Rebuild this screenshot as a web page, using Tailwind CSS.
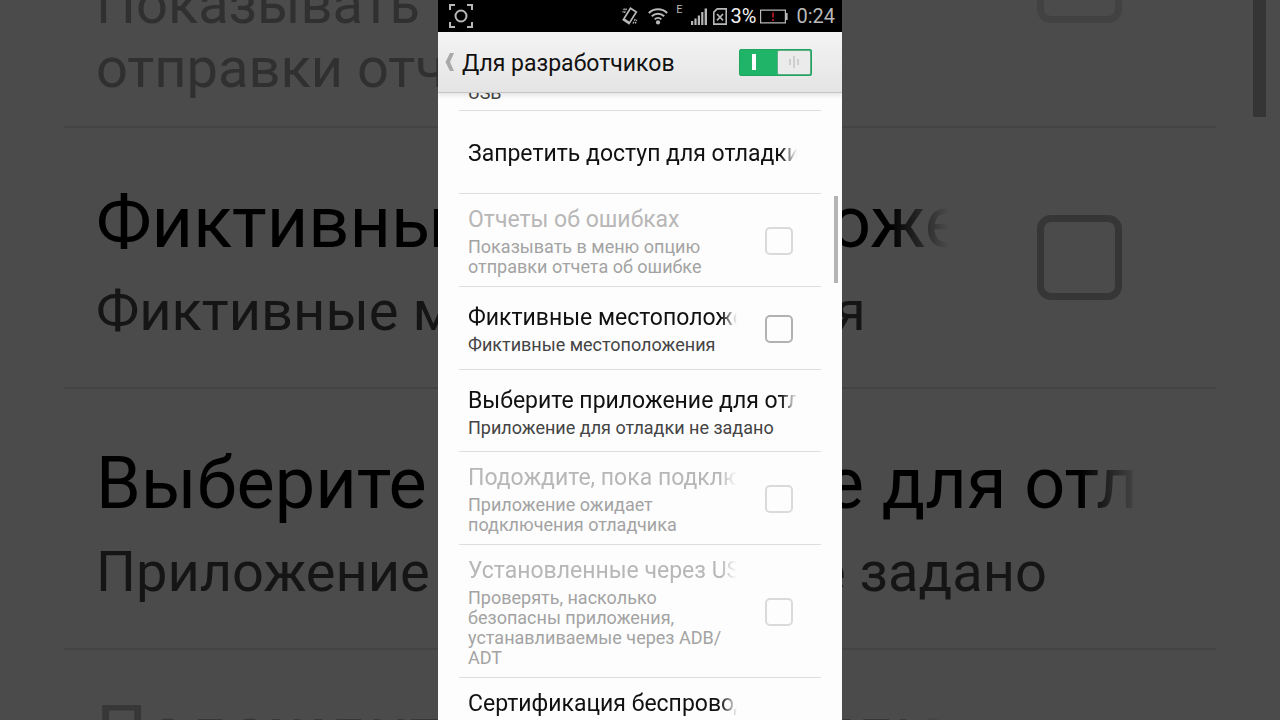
<!DOCTYPE html>
<html lang="ru">
<head>
    <meta charset="UTF-8">
    <meta name="viewport" content="width=device-width, initial-scale=1.0">
    <title>Для разработчиков</title>
    <script src="https://cdn.jsdelivr.net/npm/@tailwindcss/browser@4"></script>
</head>
<body class="relative h-screen overflow-hidden bg-[#4b4b4b] font-[Roboto,sans-serif]">
    <!-- Enlarged, dimmed backdrop -->
    <div class="absolute inset-0 overflow-hidden" aria-hidden="true">
        <ul class="mx-[5%] -mt-[166px]">
            <li class="flex h-[294px] items-center gap-[88px] border-b-2 border-[#434343] pr-[76px] pl-8">
                <div class="min-w-0 flex-1">
                    <p class="h-[111px]"></p>
                    <p class="text-[56px] leading-[64px] text-[#303030]">Показывать в меню опцию отправки отчета об ошибке</p>
                </div>
                <span class="mr-[18px] size-[85px] rounded-[14px] border-[7px] border-[#424242]"></span>
            </li>
            <li class="flex h-[261px] items-center gap-[88px] border-b-2 border-[#434343] pr-[76px] pl-8">
                <div class="min-w-0 flex-1 pt-1">
                    <p class="mb-[10px] overflow-hidden text-[72px] leading-[93px] whitespace-nowrap text-black [mask-image:linear-gradient(to_right,black_calc(100%-60px),transparent)]">Фиктивные местоположения</p>
                    <p class="text-[56px] leading-[64px] text-[#151515]">Фиктивные местоположения</p>
                </div>
                <span class="mr-[18px] size-[85px] rounded-[14px] border-[7px] border-[#363636]"></span>
            </li>
            <li class="flex h-[261px] items-center border-b-2 border-[#434343] pr-[76px] pl-8">
                <div class="min-w-0 flex-1 pt-1">
                    <p class="mb-[10px] overflow-hidden text-[72px] leading-[93px] whitespace-nowrap text-black [mask-image:linear-gradient(to_right,black_calc(100%-60px),transparent)]">Выберите приложение для отладки</p>
                    <p class="text-[56px] leading-[64px] text-[#151515]">Приложение для отладки не задано</p>
                </div>
            </li>
            <li class="flex pt-9 pr-[265px] pl-8">
                <p class="min-w-0 flex-1 overflow-hidden text-[72px] leading-[93px] whitespace-nowrap text-[#373737] [mask-image:linear-gradient(to_right,black_calc(100%-60px),transparent)]">Подождите, пока подключится отладчик</p>
            </li>
        </ul>
        <div class="absolute top-0 right-[14px] h-[117px] w-[13px] bg-[#353535]"></div>
    </div>

    <!-- Phone screen -->
    <div class="relative mx-auto flex h-full w-full max-w-[404px] flex-col overflow-hidden bg-[#fdfdfd]">
        <!-- Status bar -->
        <div class="z-10 flex h-8 shrink-0 items-center bg-black pr-[7px] pl-[11px] text-[#b8b8b8]">
            <svg class="size-6" viewBox="0 0 24 24" fill="none" stroke="currentColor" stroke-width="2">
                <path d="M1 6V1h5M18 1h5v5M23 18v5h-5M6 23H1v-5"/>
                <circle cx="12" cy="12" r="5.5"/>
            </svg>
            <div class="ml-auto flex items-center">
                <svg class="mr-2 h-[18px] w-5" viewBox="0 0 20 18" fill="none" stroke="currentColor">
                    <path stroke-width="1.7" d="M10.500 1.200 16.300 5 9 16.600 3.300 12.800Z"/>
                    <path stroke-width="1.3" stroke-dasharray="2 1" d="M6.500 1.500 4 7M4.500 1.500 2.800 5.500M13 16.500l2.500-5M15.300 16.500l1.500-3.700"/>
                    <path stroke-width="2" d="M3.800 12 9 15.600"/>
                </svg>
                <svg class="h-[18px] w-5" viewBox="0 0 20 18" fill="none" stroke="currentColor" stroke-width="2">
                    <path d="M.8 6a13.2 13.2 0 0 1 18.4 0M3.8 9.3a8.9 8.9 0 0 1 12.4 0M6.7 12.4a4.7 4.7 0 0 1 6.6 0"/>
                    <circle cx="10" cy="15.4" r="2.1" fill="currentColor" stroke="none"/>
                </svg>
                <span class="mr-2 mb-3 ml-2 text-[11px] leading-3">E</span>
                <svg class="h-[18px] w-4" viewBox="0 0 16 18" fill="currentColor">
                    <path d="M0 14h2.200v4H0zM3.400 11.500h2.200V18H3.400zM6.800 8.500H9V18H6.800zM10.200 5h2.200v13h-2.200zM13.600 1.500H16V18h-2.400z"/>
                </svg>
                <svg class="ml-[6px] h-[17px] w-[14px]" viewBox="0 0 14 17" fill="none" stroke="currentColor" stroke-width="1.6">
                    <path d="M4.200.9h9v15.200H.8V4.200Z"/>
                    <path d="m4 6 6 6.400M10 6l-6 6.400"/>
                </svg>
                <span class="ml-1 text-[20px] leading-6 text-[#f2f2f2]">3%</span>
                <svg class="ml-1 h-[15px] w-7" viewBox="0 0 28 15" fill="none" stroke="currentColor">
                    <path stroke-width="1.2" d="M.6 1.100h24.800v12.800H.6Z"/>
                    <path stroke-width="2" d="M26.600 4v7"/>
                    <path stroke="#a3131d" stroke-width="2" d="M13 3.500v5M13 10v2"/>
                </svg>
                <span class="ml-2 text-[20px] leading-6">0:24</span>
            </div>
        </div>

        <!-- Title bar -->
        <header class="z-10 flex h-[61px] shrink-0 items-center border-b border-[#c6c6c6] bg-linear-to-b from-[#f4f4f4] to-[#e4e4e4] pr-[30px] pl-[7px] shadow-[0_2px_5px_rgba(0,0,0,0.12)]">
            <a href="#" class="flex items-center text-[#111]">
                <svg class="h-[18px] w-[9px] text-[#a9a9a9]" viewBox="0 0 9 18" fill="currentColor">
                    <path d="M5 0H9L5 9 9 18H5L0.500 9Z"/>
                </svg>
                <h1 class="ml-2 pt-1 text-[23px] leading-8">Для разработчиков</h1>
            </a>
            <button type="button" role="switch" aria-checked="true" aria-label="Для разработчиков" class="ml-auto flex h-[27px] w-[73px] rounded-[2px] border border-[#1fa560] bg-[#1fb467]">
                <span class="flex flex-1 items-center justify-center pr-[9px]">
                    <span class="h-4 w-1 bg-white"></span>
                </span>
                <span class="flex w-[34px] items-center justify-center gap-[2px] rounded-[2px] border border-[#5fae85] bg-[#ebebeb]">
                    <span class="h-[6px] w-[2px] bg-[#cfcfcf]"></span>
                    <span class="h-3 w-[2px] bg-[#cfcfcf]"></span>
                    <span class="h-[6px] w-[2px] bg-[#cfcfcf]"></span>
                </span>
            </button>
        </header>

        <!-- Settings list -->
        <ul class="mx-[21px] -mt-[65px]">
            <li class="flex h-[83px] items-end border-b border-[#dedede] pr-6 pb-[7px] pl-[9px]">
                <p class="text-[18px] leading-5 text-[#444]">USB</p>
            </li>
            <li class="flex min-h-[83px] items-center border-b border-[#dedede] pt-3 pb-2 pr-6 pl-[9px]">
                <p class="min-w-0 flex-1 overflow-hidden text-[23px] leading-8 whitespace-nowrap text-[#111] [mask-image:linear-gradient(to_right,black_calc(100%-16px),transparent)]">Запретить доступ для отладки по USB</p>
            </li>
            <li class="border-b border-[#dedede]">
                <label class="flex min-h-[82px] items-center gap-7 pt-[10px] pb-[9px] pr-6 pl-[9px]">
                    <span class="min-w-0 flex-1">
                        <span class="mb-px block text-[23px] leading-8 text-[#b7b7b7]">Отчеты об ошибках</span>
                        <span class="block text-[18px] leading-5 text-[#a3a3a3]">Показывать в меню опцию отправки отчета об ошибке</span>
                    </span>
                    <input type="checkbox" disabled class="mr-1 size-7 appearance-none rounded-[5px] border-2 border-[#dadada]">
                </label>
            </li>
            <li class="border-b border-[#dedede]">
                <label class="flex min-h-[82px] items-center gap-7 pt-[10px] pb-[9px] pr-6 pl-[9px]">
                    <span class="min-w-0 flex-1">
                        <span class="mb-px block overflow-hidden text-[23px] leading-8 whitespace-nowrap text-[#111] [mask-image:linear-gradient(to_right,black_calc(100%-16px),transparent)]">Фиктивные местоположения</span>
                        <span class="block text-[18px] leading-5 text-[#444]">Фиктивные местоположения</span>
                    </span>
                    <input type="checkbox" class="mr-1 size-7 appearance-none rounded-[5px] border-2 border-[#b2b2b2]">
                </label>
            </li>
            <li class="flex min-h-[82px] items-center border-b border-[#dedede] pt-[10px] pb-[9px] pr-6 pl-[9px]">
                <div class="min-w-0 flex-1">
                    <p class="mb-px overflow-hidden text-[23px] leading-8 whitespace-nowrap text-[#111] [mask-image:linear-gradient(to_right,black_calc(100%-16px),transparent)]">Выберите приложение для отладки</p>
                    <p class="text-[18px] leading-5 text-[#444]">Приложение для отладки не задано</p>
                </div>
            </li>
            <li class="border-b border-[#dedede]">
                <label class="flex min-h-[82px] items-center gap-7 pt-[10px] pb-[9px] pr-6 pl-[9px]">
                    <span class="min-w-0 flex-1">
                        <span class="mb-px block overflow-hidden text-[23px] leading-8 whitespace-nowrap text-[#b7b7b7] [mask-image:linear-gradient(to_right,black_calc(100%-16px),transparent)]">Подождите, пока подключится отладчик</span>
                        <span class="block text-[18px] leading-5 text-[#a3a3a3]">Приложение ожидает подключения отладчика</span>
                    </span>
                    <input type="checkbox" disabled class="mr-1 size-7 appearance-none rounded-[5px] border-2 border-[#dadada]">
                </label>
            </li>
            <li class="border-b border-[#dedede]">
                <label class="flex min-h-[82px] items-center gap-7 pt-[10px] pb-[9px] pr-6 pl-[9px]">
                    <span class="min-w-0 flex-1">
                        <span class="mb-px block overflow-hidden text-[23px] leading-8 whitespace-nowrap text-[#b7b7b7] [mask-image:linear-gradient(to_right,black_calc(100%-16px),transparent)]">Установленные через USB</span>
                        <span class="block text-[18px] leading-5 text-[#a3a3a3]">Проверять, насколько безопасны приложения, устанавливаемые через ADB/<wbr>ADT</span>
                    </span>
                    <input type="checkbox" disabled class="mr-1 size-7 appearance-none rounded-[5px] border-2 border-[#dadada]">
                </label>
            </li>
            <li class="flex pt-[10px] pr-[84px] pl-[9px]">
                <p class="min-w-0 flex-1 overflow-hidden text-[23px] leading-8 whitespace-nowrap text-[#111] [mask-image:linear-gradient(to_right,black_calc(100%-16px),transparent)]">Сертификация беспроводных мониторов</p>
            </li>
        </ul>

        <!-- Scroll indicator -->
        <div class="absolute top-[196px] right-1 h-[87px] w-1 bg-[#b4b4b4]"></div>
    </div>
</body>
</html>
